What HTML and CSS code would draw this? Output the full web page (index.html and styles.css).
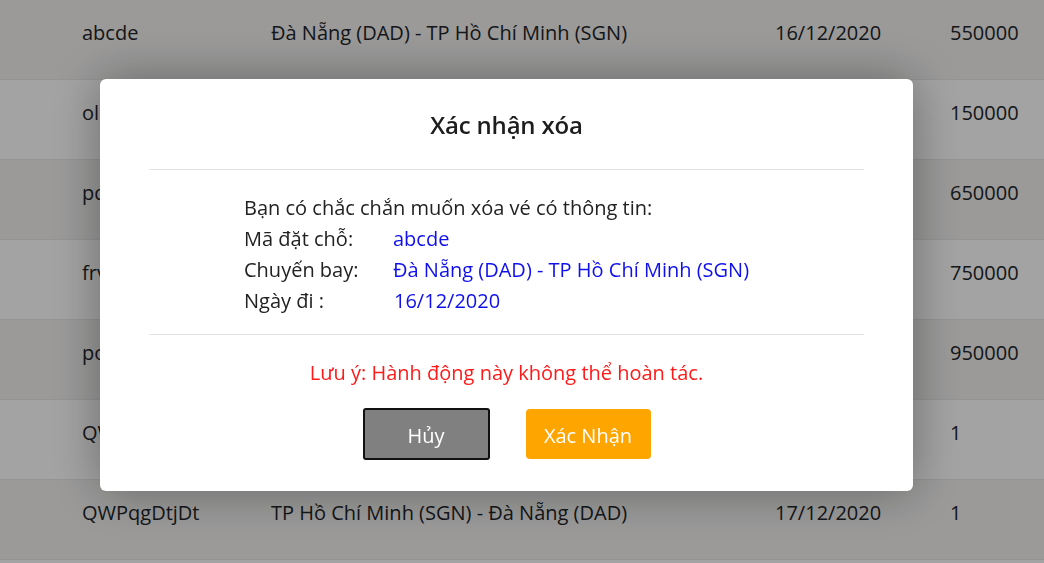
FILE: index.html
```html
<!DOCTYPE html>
<html lang="vi">
<head>
<meta charset="utf-8">
<title>Xác nhận xóa</title>
<link rel="stylesheet" href="styles.css">
</head>
<body>
<div class="table">
  <div class="row striped"><span>abcde</span><span>Đà Nẵng (DAD) - TP Hồ Chí Minh (SGN)</span><span>16/12/2020</span><span>550000</span></div>
  <div class="row"><span>olkjh</span><span>TP Hồ Chí Minh (SGN) - Hà Nội (HAN)</span><span>16/12/2020</span><span>150000</span></div>
  <div class="row striped"><span>pqrst</span><span>Hà Nội (HAN) - Đà Nẵng (DAD)</span><span>16/12/2020</span><span>650000</span></div>
  <div class="row"><span>frvbg</span><span>Hà Nội (HAN) - TP Hồ Chí Minh (SGN)</span><span>17/12/2020</span><span>750000</span></div>
  <div class="row striped"><span>poiuy</span><span>Đà Nẵng (DAD) - Hà Nội (HAN)</span><span>17/12/2020</span><span>950000</span></div>
  <div class="row"><span>QWPqgDtjDt</span><span>Hà Nội (HAN) - Đà Nẵng (DAD)</span><span>17/12/2020</span><span>1</span></div>
  <div class="row striped"><span>QWPqgDtjDt</span><span>TP Hồ Chí Minh (SGN) - Đà Nẵng (DAD)</span><span>17/12/2020</span><span>1</span></div>
</div>

<div class="overlay">
  <div class="modal">
    <div class="modal-header">Xác nhận xóa</div>
    <div class="modal-body">
      <p class="intro">Bạn có chắc chắn muốn xóa vé có thông tin:</p>
      <div class="info">
        <span class="label">Mã đặt chỗ:</span><span class="value">abcde</span>
        <span class="label">Chuyến bay:</span><span class="value">Đà Nẵng (DAD) - TP Hồ Chí Minh (SGN)</span>
        <span class="label">Ngày đi :</span><span class="value date">16/12/2020</span>
      </div>
    </div>
    <div class="modal-footer">
      <p class="warning">Lưu ý: Hành động này không thể hoàn tác.</p>
      <div class="actions">
        <button class="btn btn-cancel">Hủy</button>
        <button class="btn btn-confirm">Xác Nhận</button>
      </div>
    </div>
  </div>
</div>
</body>
</html>
```

FILE: styles.css
```css
* { box-sizing: border-box; }
html, body { margin: 0; padding: 0; }
body {
  font-family: "Open Sans", "Noto Sans", sans-serif;
  font-size: 20px;
  color: #212529;
  background: #fff;
  overflow: hidden;
  height: 563px;
}
.table {
  display: flex;
  flex-direction: column;
}
.row {
  display: grid;
  grid-template-columns: 189px 504px 175px 1fr;
  padding: 18px 0 0 82px;
  height: 80px;
  flex: none;
  border-bottom: 1px solid #e4e7ea;
  line-height: 30px;
}
.row.striped { background: #f2f1f0; }

.overlay {
  position: fixed;
  inset: 0;
  background: rgba(0, 0, 0, 0.36);
  display: flex;
  align-items: flex-start;
}
.modal {
  margin: 79px 0 0 100px;
  width: 813px;
  height: 412px;
  background: #fff;
  border-radius: 6px;
  box-shadow: 0 0 50px rgba(0, 0, 0, 0.35);
  padding: 0 49px;
  display: flex;
  flex-direction: column;
}
.modal-header {
  height: 91px;
  border-bottom: 1px solid #e3e3e3;
  text-align: center;
  font-size: 24px;
  font-weight: 600;
  letter-spacing: -0.2px;
  color: #1d1d1d;
  padding-top: 29px;
  line-height: 34px;
}
.modal-body {
  height: 165px;
  border-bottom: 1px solid #e3e3e3;
  padding: 22px 0 0 95px;
  line-height: 31px;
  color: #222;
}
.intro { margin: 0; }
.info {
  display: grid;
  grid-template-columns: 149px auto;
}
.value { color: #1010ee; }
.value.date { padding-left: 1px; }
.modal-footer {
  display: flex;
  flex-direction: column;
  align-items: center;
}
.warning {
  margin: 23px 0 0;
  line-height: 30px;
  color: #ff1a1a;
}
.actions {
  display: flex;
  gap: 36px;
  margin-top: 20px;
  align-items: center;
}
.btn {
  font-family: inherit;
  font-size: 20px;
  color: #fff;
  cursor: pointer;
  line-height: 26px;
  padding: 4px 0 0;
}
.btn-cancel {
  width: 127px;
  height: 52px;
  background: #808080;
  border: 2px solid #111;
  border-radius: 3px;
}
.btn-confirm {
  width: 125px;
  height: 50px;
  background: #ffa500;
  border: 0;
  border-radius: 4px;
}
```
